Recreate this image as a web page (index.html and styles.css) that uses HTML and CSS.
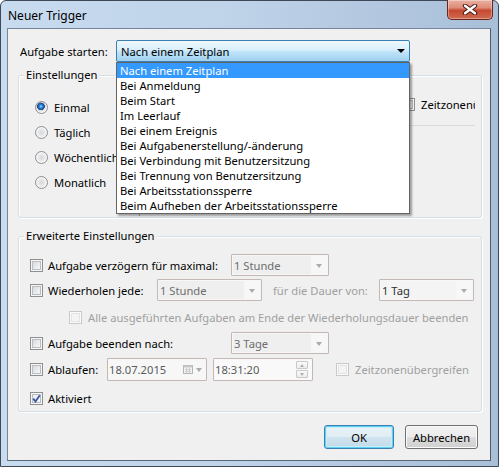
FILE: index.html
```html
<!DOCTYPE html>
<html lang="de">
<head>
<meta charset="utf-8">
<title>Neuer Trigger</title>
<link rel="stylesheet" href="styles.css">
</head>
<body>
<div class="window">
  <div class="titlebar">
    <span class="title">Neuer Trigger</span>
    <div class="close">
      <svg width="18" height="11" viewBox="0 0 18 11"><path d="M4 1.8 L14 9.2 M14 1.8 L4 9.2" stroke="#4a1a10" stroke-width="4.4" stroke-linecap="round"/><path d="M4 1.8 L14 9.2 M14 1.8 L4 9.2" stroke="#fff" stroke-width="2.4" stroke-linecap="round"/></svg>
    </div>
  </div>
  <div class="client">
    <div class="start-row">
      <span class="start-label">Aufgabe starten:</span>
      <div class="combo-open">
        <span class="combo-text">Nach einem Zeitplan</span>
        <span class="arrow-black"></span>
        <ul class="dropdown">
          <li class="sel">Nach einem Zeitplan</li>
          <li>Bei Anmeldung</li>
          <li>Beim Start</li>
          <li>Im Leerlauf</li>
          <li>Bei einem Ereignis</li>
          <li>Bei Aufgabenerstellung/-änderung</li>
          <li>Bei Verbindung mit Benutzersitzung</li>
          <li>Bei Trennung von Benutzersitzung</li>
          <li>Bei Arbeitsstationssperre</li>
          <li>Beim Aufheben der Arbeitsstationssperre</li>
        </ul>
      </div>
    </div>

    <div class="group g1">
      <span class="legend">Einstellungen</span>
      <div class="g1-body">
        <div class="radios">
          <div class="radio-row"><span class="radio checked"></span><span>Einmal</span></div>
          <div class="radio-row"><span class="radio"></span><span>Täglich</span></div>
          <div class="radio-row"><span class="radio"></span><span>Wöchentlich</span></div>
          <div class="radio-row"><span class="radio"></span><span>Monatlich</span></div>
        </div>
        <div class="vsep"></div>
        <div class="panel">
          <div class="panel-row">
            <span class="cb"></span>
            <span class="clip">Zeitzonenübergreifend</span>
          </div>
          <div class="hsep"></div>
        </div>
      </div>
    </div>

    <div class="group g2">
      <span class="legend">Erweiterte Einstellungen</span>
      <div class="row r1">
        <span class="cb"></span>
        <span class="lbl w183">Aufgabe verzögern für maximal:</span>
        <div class="dcombo w98"><span class="dtext">1 Stunde</span><span class="arrow-grey"></span></div>
      </div>
      <div class="row r2">
        <span class="cb"></span>
        <span class="lbl w109">Wiederholen jede:</span>
        <div class="dcombo w105"><span class="dtext">1 Stunde</span><span class="arrow-grey"></span></div>
        <span class="dis-lbl dauer">für die Dauer von:</span>
        <div class="dcombo w95"><span class="dtext dark">1 Tag</span><span class="arrow-grey"></span></div>
      </div>
      <div class="row r3">
        <span class="cb disabled"></span>
        <span class="dis-lbl gap6">Alle ausgeführten Aufgaben am Ende der Wiederholungsdauer beenden</span>
      </div>
      <div class="row r4">
        <span class="cb"></span>
        <span class="lbl w183">Aufgabe beenden nach:</span>
        <div class="dcombo w98"><span class="dtext">3 Tage</span><span class="arrow-grey"></span></div>
      </div>
      <div class="row r5">
        <span class="cb"></span>
        <span class="lbl w59">Ablaufen:</span>
        <div class="field date">
          <span class="ftext">18.07.2015</span>
          <svg class="cal" width="10" height="9" viewBox="0 0 10 9"><rect x="0.5" y="0.5" width="9" height="8" fill="#f4f4f4" stroke="#b4b4b4"/><rect x="0.5" y="0.5" width="9" height="2" fill="#c8c8c8"/><path d="M2 4.5h6M2 6.5h6M3.5 3v5M6.5 3v5" stroke="#cfcfcf" stroke-width="1"/></svg>
          <span class="arrow-grey small"></span>
        </div>
        <div class="field time">
          <span class="ftext">18:31:20</span>
          <div class="spin">
            <span class="spin-btn"><span class="up"></span></span>
            <span class="spin-btn"><span class="down"></span></span>
          </div>
        </div>
        <span class="cb disabled zz"></span>
        <span class="dis-lbl gap6">Zeitzonenübergreifen</span>
      </div>
      <div class="row r6">
        <span class="cb checked">
          <svg width="9" height="9" viewBox="0 0 9 9"><path d="M1.2 4.6 L3.5 7.4 L7.8 1.2" fill="none" stroke="#3a57a5" stroke-width="1.8"/></svg>
        </span>
        <span class="lbl">Aktiviert</span>
      </div>
    </div>

    <div class="buttons">
      <button class="btn default">OK</button>
      <button class="btn cancel">Abbrechen</button>
    </div>
  </div>
</div>
</body>
</html>
```

FILE: styles.css
```css
* { box-sizing: border-box; }
html, body { margin: 0; padding: 0; }
body {
  width: 499px;
  height: 467px;
  overflow: hidden;
  font-family: "Noto Sans", "Open Sans", sans-serif;
  font-size: 11.2px;
  color: #000;
  background: #ffffff;
}

.window {
  width: 499px;
  height: 467px;
  border: 1px solid #3e4857;
  border-radius: 6px 6px 0 0;
  background: linear-gradient(to right, #c8dbef 0%, #bfd3e9 45%, #a9bfd8 100%);
  display: flex;
  flex-direction: column;
}

.titlebar {
  height: 27px;
  flex: none;
  display: flex;
  align-items: center;
  padding-left: 7px;
}
.title { flex: 1; font-size: 12px; padding-top: 1px; }
.close {
  align-self: flex-start;
  margin-top: -1px;
  margin-right: 5px;
  width: 46px;
  height: 20px;
  border: 1px solid #6b2518;
  border-top: none;
  border-radius: 0 0 5px 5px;
  background: linear-gradient(#eab0a2 0%, #df8d78 40%, #c64a31 55%, #cf6a50 100%);
  box-shadow: inset 0 0 0 1px rgba(255,255,255,0.35);
  display: flex;
  align-items: center;
  justify-content: center;
}

.client {
  flex: 1;
  margin: 0 7px 5px 6px;
  border: 1px solid #76879b;
  border-right-color: #4d5a6a;
  border-bottom-color: #5a6777;
  background: #f0f0f0;
  display: flex;
  flex-direction: column;
}

/* top row */
.start-row {
  display: flex;
  align-items: center;
  padding: 11px 0 0 12px;
}
.start-label { width: 96px; }
.combo-open {
  position: relative;
  width: 294px;
  height: 22px;
  border: 1px solid #3c7fb1;
  border-radius: 2px;
  background: linear-gradient(#eef8fe 0%, #d8effc 45%, #bfe3f8 55%, #9fd0ef 100%);
  display: flex;
  align-items: center;
  padding-left: 4px;
}
.combo-text { flex: 1; }
.arrow-black {
  width: 0; height: 0;
  border-left: 4px solid transparent;
  border-right: 4px solid transparent;
  border-top: 4px solid #000;
  margin-right: 4px;
}
.dropdown {
  position: absolute;
  left: -1px;
  top: 21px;
  width: 294px;
  margin: 0;
  padding: 0;
  list-style: none;
  background: #fff;
  border: 1px solid #646464;
  box-shadow: 2px 2px 2px rgba(0,0,0,0.35);
  z-index: 5;
}
.dropdown li {
  height: 15px;
  line-height: 15px;
  padding-left: 3px;
  white-space: nowrap;
}
.dropdown li.sel { background: #3399ff; color: #fff; }

/* group boxes */
.group {
  display: flex;
  flex-direction: column;
  border: 1px solid #d5dfe5;
  border-radius: 3px;
  box-shadow: inset 1px 1px 0 #fff, 1px 1px 0 #fff;
  margin: 0 8px 0 10px;
}
.g1 { margin-top: 13px; }
.g2 { margin-top: 18px; padding-bottom: 2px; }
.legend {
  align-self: flex-start;
  margin: -9px 0 0 5px;
  padding: 0 2px;
  line-height: 16px;
  background: #f0f0f0;
}

.g1-body { display: flex; }
.radios {
  width: 120px;
  padding: 12px 0 22px 16px;
}
.radio-row {
  display: flex;
  align-items: center;
  height: 25px;
  gap: 6px;
  white-space: nowrap;
}
.radio {
  flex: none;
  width: 13px;
  height: 13px;
  border-radius: 50%;
  border: 1px solid #8d8e8f;
  background: radial-gradient(circle at 50% 50%, #d6d8db 0, #e6e7e9 3px, #f8f8f8 5.5px);
}
.radio.checked {
  background: radial-gradient(circle at 45% 40%, #a6dcff 0, #2f86dc 1.6px, #175aa8 3px, #27466e 3.6px, #d8dadc 4.1px, #f6f6f6 5.6px);
}
.vsep {
  width: 1px;
  background: #a0a0a0;
  margin: 5px 0 1px 0;
}
.panel {
  flex: 1;
  padding: 10px 6px 0 6px;
  display: flex;
  flex-direction: column;
}
.panel-row {
  display: flex;
  align-items: center;
  justify-content: flex-end;
  height: 22px;
  gap: 6px;
}
.clip {
  width: 54px;
  overflow: hidden;
  white-space: nowrap;
}
.hsep {
  height: 1px;
  background: #dadada;
  margin-top: 10px;
}

/* rows in extended settings */
.row {
  display: flex;
  align-items: center;
  padding-left: 11px;
  white-space: nowrap;
}
.r1 { margin-top: 10px; height: 22px; }
.r2 { margin-top: 3px; height: 22px; }
.r3 { margin-top: 3px; height: 26px; padding-left: 50px; }
.r4 { margin-top: 2px; height: 22px; }
.r5 { margin-top: 4px; height: 23px; }
.r6 { margin-top: 6px; height: 22px; }

.cb {
  flex: none;
  width: 13px;
  height: 13px;
  border: 1px solid #8e8f8f;
  background: linear-gradient(135deg, #cfd2d6 0%, #eceef0 60%, #fbfbfb 100%);
  box-shadow: inset 0 0 0 1px #f6f6f6, inset 0 0 0 2px #b9bdc2;
  display: flex;
  align-items: center;
  justify-content: center;
}
.cb.disabled {
  border-color: #c9c9c9;
  background: #f4f4f4;
  box-shadow: inset 0 0 0 1px #fbfbfb, inset 0 0 0 2px #e3e3e3;
}
.cb.checked {
  background: linear-gradient(135deg, #e4e6e9 0%, #f4f5f6 60%, #fdfdfd 100%);
}
.lbl { margin-left: 5px; }
.w183 { width: 183px; }
.w109 { width: 109px; }
.w59 { width: 59px; }
.dis-lbl { color: #a0a0a0; }
.gap6 { margin-left: 6px; }
.dauer { margin-left: 11px; width: 106px; }

.dcombo {
  flex: none;
  height: 22px;
  border: 1px solid #c3b8b3;
  border-radius: 1px;
  background: #f7f7f7;
  display: flex;
  align-items: stretch;
  padding: 1px;
}
.w98 { width: 98px; }
.w105 { width: 105px; }
.w95 { width: 95px; }
.dtext {
  flex: 1;
  background: #efefef;
  color: #6d6d6d;
  display: flex;
  align-items: center;
  padding-left: 1px;
}
.dtext.dark { color: #303030; background: #f4f4f4; }
.arrow-grey {
  flex: none;
  align-self: center;
  width: 0; height: 0;
  border-left: 3.5px solid transparent;
  border-right: 3.5px solid transparent;
  border-top: 4px solid #ababab;
  margin: 1px 5px 0 5px;
}
.arrow-grey.small { margin: 1px 4px 0 3px; }

.field {
  flex: none;
  width: 100px;
  height: 23px;
  border: 1px solid #c3b8b3;
  border-radius: 1px;
  background: #f7f7f7;
  display: flex;
  align-items: center;
  padding-left: 1px;
}
.time { margin-left: 6px; background: #f9f9f9; }
.ftext { flex: 1; color: #5a5a5a; }
.cal { flex: none; }
.spin {
  flex: none;
  display: flex;
  flex-direction: column;
  gap: 1px;
  margin-right: 4px;
}
.spin-btn {
  width: 12px;
  height: 8px;
  border: 1px solid #c9c9c9;
  border-radius: 1px;
  background: linear-gradient(#fbfbfb, #ececec);
  display: flex;
  align-items: center;
  justify-content: center;
}
.up {
  width: 0; height: 0;
  border-left: 2.5px solid transparent;
  border-right: 2.5px solid transparent;
  border-bottom: 3px solid #b0b0b0;
}
.down {
  width: 0; height: 0;
  border-left: 2.5px solid transparent;
  border-right: 2.5px solid transparent;
  border-top: 3px solid #b0b0b0;
}
.zz { margin-left: 23px; }

/* buttons */
.buttons {
  display: flex;
  justify-content: flex-end;
  gap: 11px;
  margin: 13px 12px 0 0;
}
.btn {
  height: 24px;
  font-family: inherit;
  font-size: 11.2px;
  color: #000;
  border: 1px solid #707070;
  border-radius: 3px;
  background: linear-gradient(#f2f2f2 0%, #ebebeb 48%, #dddddd 52%, #cfcfcf 100%);
  box-shadow: inset 0 0 0 1px #fbfbfb;
  padding: 0;
}
.btn.default {
  width: 70px;
  border-color: #3c7fb1;
  background: linear-gradient(#eaf4f9 0%, #e0edf4 48%, #cfe3ee 52%, #c2dbe9 100%);
  box-shadow: inset 0 0 0 1px #5fd2f5, inset 0 0 0 2px #c6ecf8;
}
.btn.cancel { width: 73px; }
```
